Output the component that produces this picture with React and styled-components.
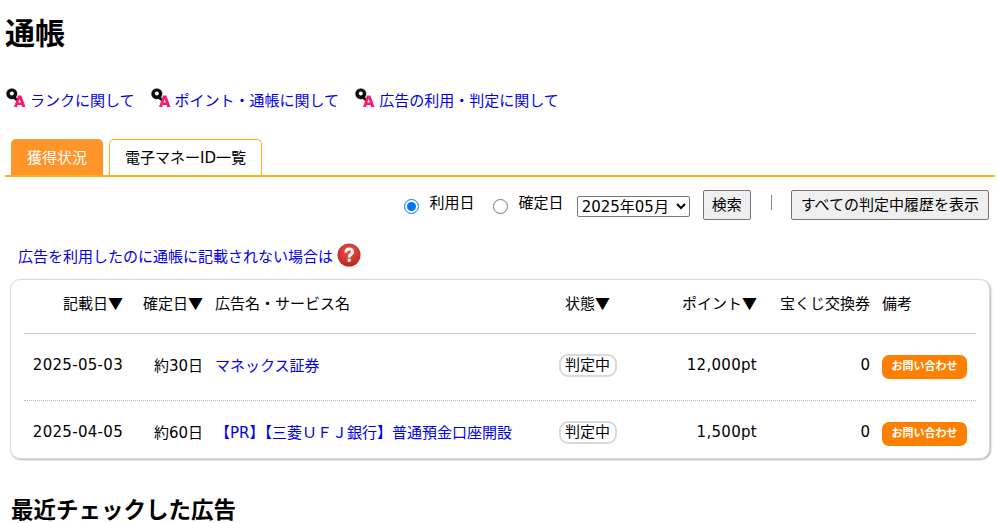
import React from "react";
import styled, { createGlobalStyle } from "styled-components";

const Global = createGlobalStyle`
  html, body { margin: 0; padding: 0; background: #fff; }
  body {
    font-family: "DejaVu Sans", "Noto Sans CJK JP", sans-serif;
    font-size: 15px;
    color: #000;
    overflow: hidden;
  }
`;

const Page = styled.div`
  width: 998px;
  height: 523px;
  overflow: hidden;
`;

const Title = styled.h1`
  margin: 0;
  padding: 15px 0 0 5px;
  height: 72px;
  box-sizing: border-box;
  font-size: 30px;
  line-height: 38px;
  font-weight: bold;
`;

const HelpRow = styled.div`
  display: flex;
  gap: 15px;
  padding: 14px 0 0 5px;
  height: 66px;
  box-sizing: border-box;
`;

const HelpLink = styled.a`
  display: flex;
  align-items: center;
  gap: 1px;
  height: 26px;
  color: #0000ee;
  text-decoration: none;
  white-space: nowrap;
`;

const Tabs = styled.div`
  display: flex;
  gap: 6px;
  margin: 0 3px 0 5px;
  padding: 0 0 0 6px;
  height: 37px;
  border-bottom: 2px solid #fbb215;
  align-items: flex-end;
`;

const Tab = styled.div`
  box-sizing: border-box;
  height: 36px;
  padding: 0 15px 3px;
  display: flex;
  align-items: center;
  border: 1px solid ${(p) => (p.$active ? "#ff9528" : "#fbb215")};
  border-bottom: none;
  border-radius: 5px 5px 0 0;
  background: ${(p) => (p.$active ? "#ff9528" : "#fff")};
  color: ${(p) => (p.$active ? "#fff" : "#000")};
`;

const FilterBar = styled.form`
  display: flex;
  justify-content: flex-end;
  align-items: center;
  height: 30px;
  margin: 13px 9px 0 0;
`;

const RadioLabel = styled.label`
  display: flex;
  align-items: center;
  margin-right: ${(p) => p.$gap}px;
  padding-bottom: 8px;
`;

const Radio = styled.input`
  margin: 11px 11px 0 0;
  width: 15px;
  height: 15px;
`;

const MonthSelect = styled.select`
  width: 113px;
  height: 21px;
  margin: 2px 13px 0 -7px;
  font: inherit;
  padding: 0;
  background: #fff;
  color: #000;
  border: 1px solid #767676;
  border-radius: 2px;
`;

const Button = styled.button`
  height: 30px;
  padding: 0 ${(p) => (p.$wide ? 9 : 8)}px 3px;
  font: inherit;
  color: #000;
  background: #efefef;
  border: 1px solid #767676;
  border-radius: 2px;
`;

const Sep = styled.span`
  width: 1px;
  height: 15px;
  margin: 0 19px 5px 20px;
  background: #888;
`;

const NoticeRow = styled.div`
  display: flex;
  align-items: center;
  gap: 4px;
  padding-left: 18px;
  margin-top: 22px;
  height: 26px;
  color: #0000ee;
`;

const Card = styled.div`
  box-sizing: border-box;
  width: 980px;
  height: 180px;
  margin: 11px 0 0 10px;
  padding: 0 13px;
  background: #fff;
  border: 1px solid #d8d8d8;
  border-radius: 10px;
  box-shadow: 1px 1px 2px rgba(0, 0, 0, 0.3);
`;

const Row = styled.div`
  display: grid;
  grid-template-columns: 105px 80px 331px 95px 128px 113px 100px;
  align-items: center;
  height: ${(p) => p.$h}px;
  border-bottom: ${(p) => p.$line || "none"};
`;

const Cell = styled.div`
  text-align: ${(p) => p.$align || "left"};
  padding: 0 6px ${(p) => p.$lift ?? 5}px;
  white-space: nowrap;
  letter-spacing: ${(p) => (p.$num ? "0.3px" : "0")};
`;

const HeadCell = styled(Cell)`
  padding-bottom: 8px;
`;

const Arrow = styled.span`
  font-family: "Noto Sans CJK JP", sans-serif;
`;

const LinkText = styled.a`
  color: #0000ee;
  text-decoration: none;
`;

const Status = styled.span`
  display: inline-block;
  box-sizing: border-box;
  width: 58px;
  height: 23px;
  line-height: 19px;
  text-align: center;
  border: 2px solid #d9d9d9;
  border-radius: 9px;
`;

const Contact = styled.a`
  display: block;
  width: 85px;
  height: 24px;
  line-height: 23px;
  text-align: center;
  background: #ff8000;
  color: #fff;
  font-size: 11px;
  font-weight: bold;
  border-radius: 7px;
`;

const SubTitle = styled.h2`
  margin: 36px 0 0 11px;
  font-size: 22.5px;
  line-height: 30px;
  font-weight: bold;
`;

const QaIcon = () => (
  <svg width="24" height="24" viewBox="0 0 24 24">
    <circle cx="6.8" cy="6.8" r="6" fill="#c9b98f" opacity="0.6" />
    <circle cx="6.8" cy="6.8" r="5.4" fill="#0c0c0c" />
    <circle cx="6.8" cy="6.6" r="2" fill="#fff" />
    <path d="M8 9.5l4.5 4" stroke="#0c0c0c" strokeWidth="2.6" />
    <path d="M9 20l4-11.5h3.4L20.5 20h-3.3l-.6-2h-3.9l-.6 2zM13.4 15.6h2.5l-1.2-3.8z" fill="#fb1a70" fillRule="evenodd" />
  </svg>
);

const HelpIcon = () => (
  <svg width="24" height="24" viewBox="0 0 24 24">
    <defs>
      <radialGradient id="red" cx="50%" cy="35%" r="70%">
        <stop offset="0" stopColor="#ee5a4c" />
        <stop offset="1" stopColor="#b5201c" />
      </radialGradient>
    </defs>
    <circle cx="12" cy="12" r="11.5" fill="url(#red)" />
    <path d="M7.4 9.4C7.4 6.3 9.4 4.6 12.2 4.6s4.8 1.6 4.8 4.1c0 3.4-3.4 3.4-3.4 5.9h-2.8c0-3.9 3.1-4 3.1-5.8 0-.9-.7-1.6-1.7-1.6-1.1 0-1.8.8-1.9 2.2z" fill="#fff" />
    <rect x="10.7" y="15.7" width="2.9" height="3" fill="#fff" />
  </svg>
);

const rows = [
  { date: "2025-05-03", fixed: "約30日", name: "マネックス証券", pt: "12,000pt" },
  { date: "2025-04-05", fixed: "約60日", name: "【PR】【三菱ＵＦＪ銀行】普通預金口座開設", pt: "1,500pt" },
];

export default function App() {
  return (
    <Page>
      <Global />
      <Title>通帳</Title>
      <HelpRow>
        <HelpLink><QaIcon />ランクに関して</HelpLink>
        <HelpLink><QaIcon />ポイント・通帳に関して</HelpLink>
        <HelpLink><QaIcon />広告の利用・判定に関して</HelpLink>
      </HelpRow>
      <Tabs>
        <Tab $active>獲得状況</Tab>
        <Tab>電子マネーID一覧</Tab>
      </Tabs>
      <FilterBar>
        <RadioLabel $gap={18}><Radio type="radio" name="d" defaultChecked />利用日</RadioLabel>
        <RadioLabel $gap={20}><Radio type="radio" name="d" />確定日</RadioLabel>
        <MonthSelect defaultValue="2025年05月">
          <option>2025年05月</option>
        </MonthSelect>
        <Button type="button">検索</Button>
        <Sep />
        <Button type="button" $wide>すべての判定中履歴を表示</Button>
      </FilterBar>
      <NoticeRow>広告を利用したのに通帳に記載されない場合は<HelpIcon /></NoticeRow>
      <Card>
        <Row $h={53} $line="1px solid #ccc">
          <HeadCell $align="right">記載日<Arrow>▼</Arrow></HeadCell>
          <HeadCell $align="right">確定日<Arrow>▼</Arrow></HeadCell>
          <HeadCell>広告名・サービス名</HeadCell>
          <HeadCell $align="center">状態<Arrow>▼</Arrow></HeadCell>
          <HeadCell $align="right">ポイント<Arrow>▼</Arrow></HeadCell>
          <HeadCell $align="right">宝くじ交換券</HeadCell>
          <HeadCell>備考</HeadCell>
        </Row>
        {rows.map((r, i) => (
          <Row key={r.date} $h={66} $line={i === 0 ? "1px dotted #bbb" : "none"}>
            <Cell $align="right" $num>{r.date}</Cell>
            <Cell $align="right">{r.fixed}</Cell>
            <Cell><LinkText>{r.name}</LinkText></Cell>
            <Cell $align="center" $lift={3}><Status>判定中</Status></Cell>
            <Cell $align="right" $num>{r.pt}</Cell>
            <Cell $align="right">0</Cell>
            <Cell $lift={0}><Contact>お問い合わせ</Contact></Cell>
          </Row>
        ))}
      </Card>
      <SubTitle>最近チェックした広告</SubTitle>
    </Page>
  );
}
